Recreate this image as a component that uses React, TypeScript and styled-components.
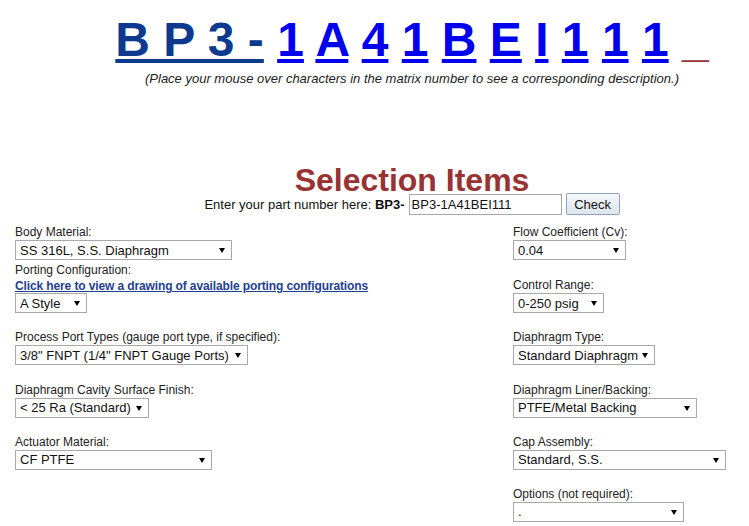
import React from "react";
import styled, { createGlobalStyle } from "styled-components";

const GlobalStyle = createGlobalStyle`
  html, body {
    margin: 0;
    padding: 0;
    background: #fff;
    overflow: hidden;
  }
  body {
    font-family: "Liberation Sans", Arial, sans-serif;
    color: #222;
  }
`;

const Page = styled.div`
  width: 734px;
  margin-left: 15px;
`;

// the heading block is centred a little right of the window centre
const Header = styled.header`
  padding-left: 60px;
`;

const Matrix = styled.div`
  padding-top: 12px;
  text-align: center;
  white-space: pre;
  font: bold 48px "Liberation Sans", Arial, sans-serif;
  line-height: normal;
`;

const Code = styled.a<{ $prefix?: boolean }>`
  color: ${(p) => (p.$prefix ? "#0b3a8f" : "#0000f0")};
  text-decoration: underline;
  cursor: pointer;
`;

const Tail = styled.span`
  color: #993333;
`;

const Hint = styled.div`
  margin-top: 4px;
  text-align: center;
  font-size: 13px;
  font-style: italic;
  line-height: 15px;
  color: #222;
`;

const Title = styled.h1`
  margin: 82px 0 0;
  text-align: center;
  font: bold 32px "Liberation Sans", Arial, sans-serif;
  line-height: 24px;
  color: #993333;
`;

const PartRow = styled.div`
  margin-top: 1px;
  display: flex;
  justify-content: center;
  align-items: center;
  gap: 3px;
  font-size: 13px;
  color: #111;
  b {
    font-weight: bold;
  }
`;

const PartInput = styled.input`
  box-sizing: border-box;
  width: 153px;
  height: 21px;
  margin-left: 1px;
  padding: 0 2px;
  border: 1px solid #a9a9a9;
  font: 13px "Liberation Sans", Arial, sans-serif;
  color: #111;
  outline: none;
`;

const CheckButton = styled.button`
  box-sizing: border-box;
  width: 54px;
  height: 22px;
  margin-left: 1px;
  padding: 0;
  border: 1px solid #8ea3bf;
  border-radius: 2px;
  background: linear-gradient(#f5f7fa, #dde5ee);
  font: 13px "Liberation Sans", Arial, sans-serif;
  color: #111;
`;

const Fields = styled.div`
  margin-top: 9px;
  display: grid;
  grid-template-columns: 498px 1fr;
  grid-template-rows: 36px 53.2px repeat(4, 52.2px);
  align-items: end;
`;

const Field = styled.div`
  display: flex;
  flex-direction: column;
  align-items: flex-start;
`;

const Label = styled.div`
  font-size: 12px;
  line-height: 15px;
  color: #222;
`;

const DrawingLink = styled.a`
  margin-bottom: -1px;
  font-size: 12px;
  font-weight: bold;
  line-height: 16px;
  color: #1f3f8f;
  text-decoration: underline;
  letter-spacing: -0.12px;
`;

const SelectWrap = styled.span<{ $width: number }>`
  position: relative;
  display: inline-block;
  width: ${(p) => p.$width}px;
  height: 20px;
  &::after {
    content: "";
    position: absolute;
    right: 7px;
    top: 8px;
    border-left: 3px solid transparent;
    border-right: 3px solid transparent;
    border-top: 5px solid #000;
    pointer-events: none;
  }
`;

const Select = styled.select`
  appearance: none;
  box-sizing: border-box;
  width: 100%;
  height: 100%;
  margin: 0;
  padding: 0 16px 0 4px;
  border: 1px solid #a9a9a9;
  border-radius: 0;
  background: #fff;
  font: 13px "Liberation Sans", Arial, sans-serif;
  color: #111;
  outline: none;
`;

type Item = { label: string; value: string; width: number; link?: string };

const leftItems: Item[] = [
  { label: "Body Material:", value: "SS 316L, S.S. Diaphragm", width: 217 },
  {
    label: "Porting Configuration:",
    link: "Click here to view a drawing of available porting configurations",
    value: "A Style",
    width: 72,
  },
  { label: "Process Port Types (gauge port type, if specified):", value: '3/8" FNPT (1/4" FNPT Gauge Ports)', width: 233 },
  { label: "Diaphragm Cavity Surface Finish:", value: "< 25 Ra (Standard)", width: 134 },
  { label: "Actuator Material:", value: "CF PTFE", width: 197 },
];

const rightItems: Item[] = [
  { label: "Flow Coefficient (Cv):", value: "0.04", width: 113 },
  { label: "Control Range:", value: "0-250 psig", width: 91 },
  { label: "Diaphragm Type:", value: "Standard Diaphragm", width: 142 },
  { label: "Diaphragm Liner/Backing:", value: "PTFE/Metal Backing", width: 184 },
  { label: "Cap Assembly:", value: "Standard, S.S.", width: 213 },
  { label: "Options (not required):", value: ".", width: 171 },
];

const matrix = ["1", "A", "4", "1", "B", "E", "I", "1", "1", "1"];

function FieldCell({ item }: { item?: Item }) {
  if (!item) return <Field />;
  return (
    <Field>
      <Label>{item.label}</Label>
      {item.link && <DrawingLink href="#">{item.link}</DrawingLink>}
      <SelectWrap $width={item.width}>
        <Select defaultValue={item.value}>
          <option>{item.value}</option>
        </Select>
      </SelectWrap>
    </Field>
  );
}

export default function App() {
  const rows = Math.max(leftItems.length, rightItems.length);
  return (
    <Page>
      <GlobalStyle />
      <Header>
        <Matrix>
          <Code href="#" $prefix>
            B P 3 -
          </Code>
          {matrix.map((c, i) => (
            <React.Fragment key={i}>
              {" "}
              <Code href="#">{c}</Code>
            </React.Fragment>
          ))}{" "}
          <Tail>_</Tail>
        </Matrix>
        <Hint>(Place your mouse over characters in the matrix number to see a corresponding description.)</Hint>
        <Title>Selection Items</Title>
        <PartRow>
          <span>
            Enter your part number here: <b>BP3-</b>
          </span>
          <PartInput defaultValue="BP3-1A41BEI111" />
          <CheckButton>Check</CheckButton>
        </PartRow>
      </Header>
      <Fields>
        {Array.from({ length: rows }).map((_, i) => (
          <React.Fragment key={i}>
            <FieldCell item={leftItems[i]} />
            <FieldCell item={rightItems[i]} />
          </React.Fragment>
        ))}
      </Fields>
    </Page>
  );
}
